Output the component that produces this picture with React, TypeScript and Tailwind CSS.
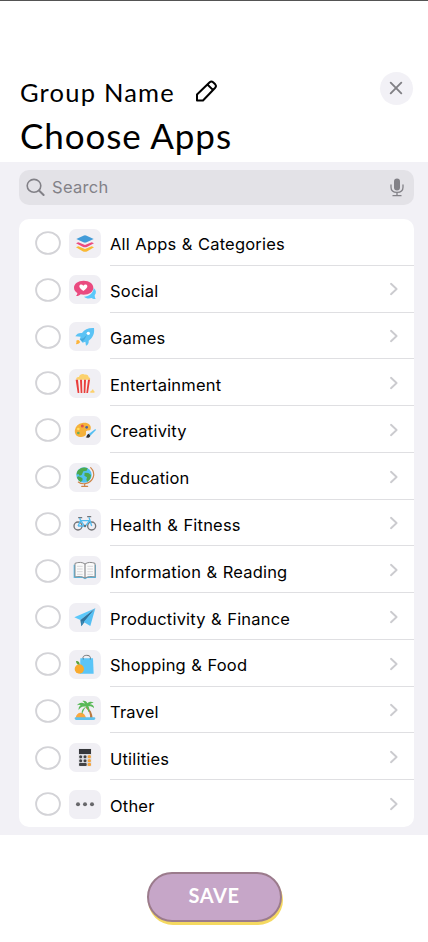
import type { ReactNode } from "react";

type Row = { label: string; icon: ReactNode };

const rows: Row[] = [
  {
    label: "All Apps & Categories",
    icon: (
      <>
        <path d="M21 55l7-3 20 8 20-8 7 3-20 12q-7 3-14 0z" fill="#f9b934" />
        <path d="M21 43l7-3 20 8 20-8 7 3-20 10q-7 3-14 0z" fill="#ec4b7f" />
        <path d="M22 30l21-10q5-2 10 0l21 10-21 10q-5 2-10 0z" fill="#429bd8" />
      </>
    ),
  },
  {
    label: "Social",
    icon: (
      <>
        <path d="M74 39c8 6 9 15 3 22 0 4 1 8 3 11-5 1-9-1-12-3-9 3-18 1-23-4 15 0 28-10 29-26z" fill="#5bc8fa" />
        <path d="M44 17c17 0 29 9 29 21S61 59 44 59l-9-1c-4 4-9 6-14 5 3-3 4-6 4-9-6-4-10-9-10-16 0-12 12-21 29-21z" fill="#ea4b80" />
        <path d="M43 48C34 42 31 38 31 34c0-6 8-7 12-2 4-5 12-4 12 2 0 4-3 8-12 14z" fill="#fff" />
      </>
    ),
  },
  {
    label: "Games",
    icon: (
      <>
        <path d="M75 18c2 17-3 29-16 38 1 7-2 12-8 15l-2-12-8 3-9-10 3-8-16-1c4-8 11-11 20-10 8-11 19-16 36-15z" fill="#5bc3f5" />
        <path d="M43 49l11-11-7 14-7 7-7-8z" fill="#46a9dc" />
        <circle cx="58" cy="34" r="5" fill="#fff" />
        <path d="M29 54c-5 1-7 6-8 13 7-1 12-3 12-8zM25 53l-4 5 7 4z" fill="#fdb43a" />
      </>
    ),
  },
  {
    label: "Entertainment",
    icon: (
      <>
        <path d="M22 33c-2-6 3-10 8-9 1-8 12-11 18-7 6-1 11 3 11 8 5 1 6 6 3 9z" fill="#fbd16c" />
        <path d="M21 32h41l-6 40H27z" fill="#f5f1f0" />
        <path d="M20 32h7l4 40h-5zM33 32h6l1 40h-5zM45 32h6l-2 40h-5zM57 32h6l-6 40h-5z" fill="#e93e3d" />
        <path d="M64 71c-1-4 1-6 4-6 1-6 6-4 6 0 4 1 4 7 0 6z" fill="#fbd16c" />
      </>
    ),
  },
  {
    label: "Creativity",
    icon: (
      <>
        <path d="M40 21c16-3 28 6 25 18-1 6-7 4-11 5-5 1-2 6-3 11-2 7-13 10-22 7-9-3-13-12-11-21 2-11 10-18 22-20z" fill="#f5b13b" />
        <circle cx="28" cy="39" r="4" fill="#ffe05d" />
        <circle cx="40" cy="30" r="4.5" fill="#e45345" />
        <circle cx="53" cy="34" r="4" fill="#4962a6" />
        <circle cx="28" cy="51" r="4" fill="#6bad5f" />
        <path d="M79 39l2 3-17 17-5-5z" fill="#55bff2" />
        <path d="M59 53l5 6c-2 7-8 7-14 5 4-2 3-9 9-11z" fill="#303236" />
      </>
    ),
  },
  {
    label: "Education",
    icon: (
      <>
        <path d="M65 14c17 17 9 44-17 48-9 1-15-1-20-5M47 62v8M38 70h18" fill="none" stroke="#cc8448" strokeWidth="3.5" strokeLinecap="round" />
        <circle cx="45" cy="36" r="23" fill="#51c0f2" />
        <path d="M27 22c8-9 20-11 29-6l-3 7-10 2-5 11-6 2-4-5-5 2c0-5 1-9 4-13zM47 29l11 1 8 6c0 9-4 16-11 20l-3-5 2-8-8-5zM29 40l11 5 1 7-6 5c-6-4-10-9-11-15z" fill="#4ca94e" />
      </>
    ),
  },
  {
    label: "Health & Fitness",
    icon: (
      <>
        <g fill="none" stroke="#737477" strokeWidth="4">
          <circle cx="27" cy="51" r="12" />
          <circle cx="68" cy="51" r="12" />
          <path d="M29 26h9M56 23h9" strokeLinecap="round" />
        </g>
        <path d="M27 51l8-16 13 18 14-19M35 35h25M35 35l-3-8M60 25l8 26M27 51h21" fill="none" stroke="#51bcf0" strokeWidth="4" strokeLinejoin="round" />
        <circle cx="48" cy="51" r="3.5" fill="#6e6e72" />
      </>
    ),
  },
  {
    label: "Information & Reading",
    icon: (
      <>
        <path d="M14 26h67v40H55l-7 4-7-4H14z" fill="#55bce8" />
        <path d="M18 22c11-4 22-4 30 2 8-6 19-6 30-2v41c-12-2-21-2-30 3-9-5-18-5-30-3z" fill="#fafafa" stroke="#8a8a8c" strokeWidth="3" />
        <path d="M48 24v41" stroke="#77777a" strokeWidth="3" />
        <path d="M24 31h17M24 39h17M24 47h17M24 55h17M55 31h17M55 39h17M55 47h17M55 55h17" stroke="#c5c5c8" strokeWidth="2" />
      </>
    ),
  },
  {
    label: "Productivity & Finance",
    icon: (
      <>
        <path d="M79 16L16 43l18 8z" fill="#5bc8fa" />
        <path d="M79 16L34 51l3 19z" fill="#30739c" />
        <path d="M79 16L44 57l20 12z" fill="#55bff3" />
        <path d="M44 57l-7 13 1-17z" fill="#398dba" />
      </>
    ),
  },
  {
    label: "Shopping & Food",
    icon: (
      <>
        <path d="M42 28V22c1-8 21-8 22 0v6" fill="none" stroke="#727477" strokeWidth="3" />
        <path d="M34 25h38l2 46H33z" fill="#5bc5f7" />
        <path d="M43 24v5M64 24v5" stroke="#467f9a" strokeWidth="2" />
        <circle cx="31" cy="57" r="14" fill="#f8aa2e" />
        <path d="M32 44c-7 0-11-4-11-11 7-1 11 3 11 11z" fill="#5aa33b" />
      </>
    ),
  },
  {
    label: "Travel",
    icon: (
      <>
        <path d="M20 66c1-11 9-17 16-16 8 1 14 8 15 16z" fill="#f9a73f" />
        <path d="M53 32c11 8 17 19 18 35l-8 1c2-14-3-25-13-33z" fill="#b9783f" />
        <path d="M52 32C40 29 31 35 29 43c-1-7 1-12 6-15-3-2-7-2-11 0 5-9 16-10 23-5-1-4-4-6-7-8 8-2 13 1 15 7 6-6 14-6 19-1-5 0-9 1-11 4 8 0 13 5 12 12-5-6-11-7-17-6 4 6 4 13 0 18-1-7-3-12-6-17-4 3-8 10-13 23-3-10 2-19 13-23z" fill="#58b957" />
        <path d="M17 67c0-2 2-3 5-3h52c3 0 5 1 5 3 0 3-2 5-5 5H22c-3 0-5-2-5-5z" fill="#5fc1ed" />
      </>
    ),
  },
  {
    label: "Utilities",
    icon: (
      <>
        <rect x="29" y="17" width="38" height="53" rx="2" fill="#d8d9dd" />
        <rect x="30" y="18" width="36" height="15" fill="#35373a" />
        <g fill="#424346">
          <circle cx="35" cy="41" r="4.5" />
          <circle cx="48" cy="41" r="4.5" />
          <circle cx="35" cy="53" r="4.5" />
          <circle cx="48" cy="53" r="4.5" />
          <rect x="30" y="60" width="23" height="9" rx="3" />
        </g>
        <g fill="#f4a23a">
          <circle cx="61" cy="41" r="5" />
          <circle cx="61" cy="53" r="5" />
          <rect x="56" y="60" width="10" height="9" rx="3" />
        </g>
      </>
    ),
  },
  {
    label: "Other",
    icon: (
      <g fill="#68686b">
        <circle cx="27" cy="43" r="6" />
        <circle cx="48" cy="43" r="6" />
        <circle cx="69" cy="43" r="6" />
      </g>
    ),
  },
];

function CategoryRow({ label, icon, index }: Row & { index: number }) {
  const last = index === rows.length - 1;
  return (
    <li className="flex h-[46.77px] pl-4">
      <div className="flex h-full items-center pt-[1.6px]">
        <svg className="h-[26px] w-[26px] shrink-0" viewBox="0 0 26 26" fill="none">
          <ellipse cx="13" cy="13" rx="11.9" ry="10.9" stroke="#d3d3d7" strokeWidth="1.9" />
        </svg>
        <span className="ml-2 block h-[29px] w-8 shrink-0 rounded-[7px] bg-[#f0eff4]">
          <svg className="block h-[29px] w-8" viewBox="0 0 96 87">{icon}</svg>
        </span>
      </div>
      <div className={`ml-[9px] flex flex-1 items-center border-b pr-[15px] ${last ? "border-transparent" : "border-[#dfdfe2]"}`}>
        <span className="flex-1 pt-[5px] text-[16.5px] leading-5 tracking-[0.2px] [word-spacing:0.5px] whitespace-nowrap">{label}</span>
        {index > 0 && (
          <svg className="mt-[1.6px] h-[14px] w-[10px]" viewBox="0 0 10 14" fill="none">
            <path d="M2 1.8l5.6 5.2L2 12.2" stroke="#cbcbcf" strokeWidth="1.9" strokeLinecap="round" strokeLinejoin="round" />
          </svg>
        )}
      </div>
    </li>
  );
}

export default function App() {
  return (
    <main className="flex h-[942px] w-[428px] flex-col overflow-hidden border-t border-[#545454] bg-white font-['Inter',sans-serif] text-black">
      <header className="flex h-[161px] shrink-0 justify-between pr-[15px] pl-5 font-['Lato',sans-serif]">
        <div className="pt-[72.5px]">
          <div className="flex h-[36px] items-center">
            <h2 className="w-[154px] text-[25.5px] leading-9 tracking-[1.2px] whitespace-nowrap">Group Name</h2>
            <svg className="ml-[21px] h-[23px] w-[23px]" viewBox="0 0 23 23" fill="none" stroke="#000" strokeWidth="2" strokeLinejoin="round">
              <path d="M2 20.5v-6L14.7 2.2q1.7-1.5 3.4 0l2.1 2.1q1.5 1.7 0 3.4L8 20.5zM12.4 4.5l5.5 5.4" />
            </svg>
          </div>
          <h1 className="text-[35px] leading-[50px] tracking-[0.9px] whitespace-nowrap">Choose Apps</h1>
        </div>
        <button aria-label="Close" className="mt-[70.5px] flex h-[33.5px] w-[33.5px] items-center justify-center rounded-full bg-[#f2f1f6]">
          <svg className="h-[14px] w-[14px]" viewBox="0 0 14 14" fill="none">
            <path d="M1.7 1.7l10.6 10.6M12.3 1.7L1.7 12.3" stroke="#818085" strokeWidth="1.9" strokeLinecap="round" />
          </svg>
        </button>
      </header>

      <section className="h-[673px] shrink-0 bg-[#f2f1f6] pt-[7.5px] pr-[14px] pl-[19px]">
        <div className="flex h-[35px] items-center rounded-[10px] bg-[#e3e2e7] pr-[10px] pl-[7px] text-[#828187]">
          <svg className="h-[19px] w-[19px]" viewBox="0 0 19 19" fill="none" stroke="currentColor" strokeWidth="1.6" strokeLinecap="round">
            <ellipse cx="8" cy="7.8" rx="6.8" ry="6.4" />
            <path d="M13 12.5l4.6 4.5" strokeWidth="2" />
          </svg>
          <span className="ml-[7px] flex-1 text-[16.5px] tracking-[0.3px]">Search</span>
          <svg className="h-[19px] w-[14px]" viewBox="0 0 14 19" fill="none" stroke="currentColor" strokeWidth="1.3" strokeLinecap="round">
            <rect x="4" y=".5" width="6" height="12" rx="3" fill="currentColor" stroke="none" />
            <path d="M1 7v2.2c0 3.2 2.3 5.1 6 5.1s6-1.9 6-5.1V7M7 14.5v3M3 17.7h8" />
          </svg>
        </div>
        <ul className="mt-[14.5px] h-[608px] overflow-hidden rounded-[10px] bg-white">
          {rows.map((row, index) => (
            <CategoryRow key={row.label} {...row} index={index} />
          ))}
        </ul>
      </section>

      <footer className="flex justify-center pt-[36.7px]">
        <button className="flex h-[50px] w-[135px] items-center justify-center rounded-full border-2 border-[#9b7b8c] bg-[#c6a6c8] pb-[3px] font-['Lato',sans-serif] text-[20px] font-bold tracking-[0.6px] text-white shadow-[1px_3px_0_#f5d960]">
          SAVE
        </button>
      </footer>
    </main>
  );
}
